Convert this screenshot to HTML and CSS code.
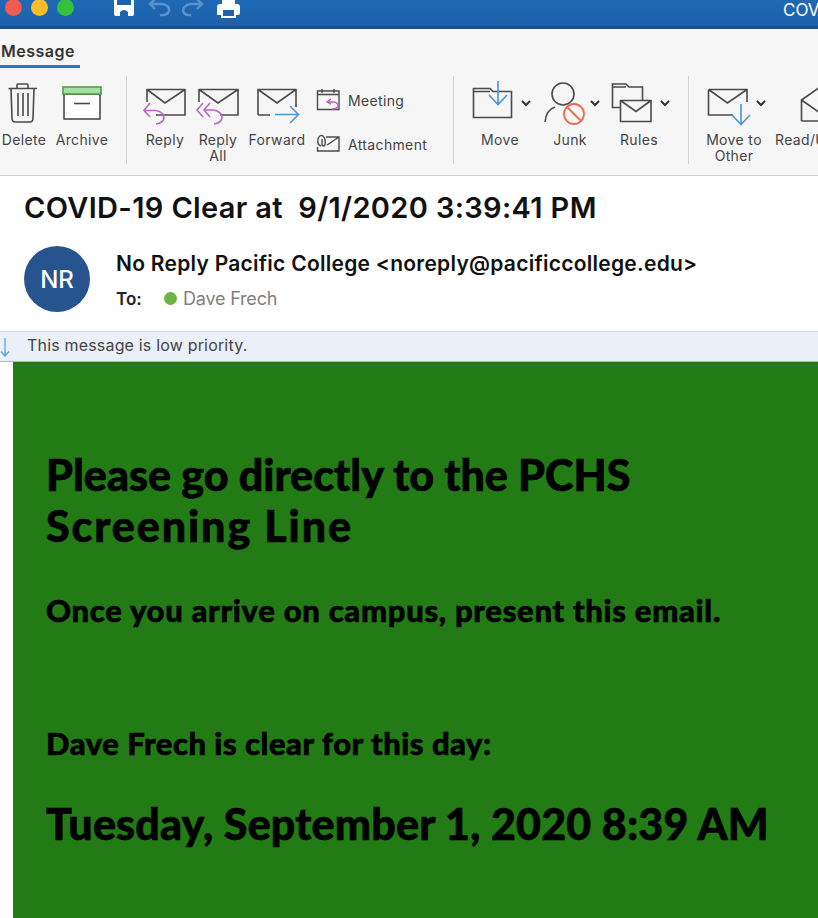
FILE: index.html
```html
<!DOCTYPE html>
<html lang="en">
<head>
    <meta charset="UTF-8">
    <title>COVID-19 Clear</title>
    <link rel="stylesheet" href="styles.css">
</head>
<body>
    <div class="titlebar">
        <div class="lights">
            <span class="light red"></span>
            <span class="light yellow"></span>
            <span class="light green"></span>
        </div>
        <svg class="quick" width="140" height="26" viewBox="110 0 140 26" fill="none">
            <path d="M114 -2H134V14Q134 16 132 16H116Q114 16 114 14Z" fill="#fff"/>
            <path d="M117 -2H131V5H117Z" fill="#1d64b0"/>
            <path d="M120 16V12Q124 8 128 12V16Z" fill="#1d64b0"/>
            <g stroke="#5a92cd" stroke-width="2.4">
                <path d="M155 -1L150 4L155 9M150 4H163Q170 6 169 11Q167 16 160 15"/>
                <path d="M197 -1L202 4L197 9M202 4H190Q183 6 183 11Q185 16 191 15"/>
            </g>
            <path d="M217 7Q217 4 220 4H237Q240 4 240 7V13Q240 15 237 15H217Z" fill="#fff"/>
            <path d="M222 -1H235V4H222Z" fill="#fff"/>
            <rect x="222" y="9" width="13" height="8" fill="#1d64b0" stroke="#fff" stroke-width="2"/>
        </svg>
        <span class="window-title">COVID-19 Clear at 9/1/2020</span>
    </div>

    <div class="ribbon">
        <div class="tabs"><span class="tab">Message</span></div>
        <div class="tools">
            <div class="tool">
                <svg width="48" height="50" viewBox="0 80 48 50" fill="none" stroke="#4a4a4a" stroke-width="1.6">
                    <path d="M8.500 88.500H37M17 88V85Q17 84 18 84H27Q28 84 28 85V88"/>
                    <path d="M11 88.500L12 118Q12 122 15 122H30Q33 122 33 118L34 88.500"/>
                    <path d="M18 93V116M23 93V116M28 93V116"/>
                </svg>
                <span>Delete</span>
            </div>
            <div class="tool">
                <svg width="68" height="50" viewBox="48 80 68 50" fill="none" stroke="#4a4a4a" stroke-width="1.6">
                    <rect x="64" y="94" width="36" height="25" fill="#fff"/>
                    <rect x="63" y="87" width="38" height="7" fill="#a6dfa2" stroke="#4f9d4f"/>
                    <path d="M74 103.500H90"/>
                </svg>
                <span>Archive</span>
            </div>
            <div class="sep"></div>
            <div class="tool">
                <svg width="52" height="50" viewBox="139 80 52 50" fill="none" stroke="#4a4a4a" stroke-width="1.6">
                    <path d="M147 102V89.500H185V115H156M147 89.500L165 103L185 89.500"/>
                    <path d="M150 103L144 110.500L150 117M144 110.500H156Q164 112 164 118Q163 123 156 124" stroke="#b968c7"/>
                </svg>
                <span>Reply</span>
            </div>
            <div class="tool">
                <svg width="52" height="50" viewBox="192 80 52 50" fill="none" stroke="#4a4a4a" stroke-width="1.6">
                    <path d="M199 102V89.500H238V115H220M199 89.500L218 103L238 89.500"/>
                    <path d="M203 103L197 110L203 117M210 103L204 110L210 117M204 110H214Q222 112 222 118Q221 123 214 124" stroke="#b968c7"/>
                </svg>
                <span>Reply<br>All</span>
            </div>
            <div class="tool">
                <svg width="62" height="50" viewBox="246 80 62 50" fill="none" stroke="#4a4a4a" stroke-width="1.6">
                    <path d="M258 115V89.500H296V107M258 115H270M258 89.500L277 103L296 89.500"/>
                    <path d="M275 114.500H298M290 106L298.500 114.500L290 123" stroke="#4a96dc"/>
                </svg>
                <span>Forward</span>
            </div>
            <div class="small-tools">
                <div class="small-tool">
                    <svg width="24" height="24" viewBox="316 89 24 24" fill="none" stroke="#4a4a4a" stroke-width="1.4">
                        <path d="M317.500 92H339V110.500H317.500Z"/>
                        <path d="M322 90V94M334 90V94M317.500 95.500H339"/>
                        <path d="M331 100L327 103L331 105M327 103H334Q339 104 338 108Q336 110 332 110" stroke="#b968c7"/>
                    </svg>
                    <span>Meeting</span>
                </div>
                <div class="small-tool">
                    <svg width="24" height="24" viewBox="316 132 24 24" fill="none" stroke="#4a4a4a" stroke-width="1.4">
                        <path d="M326 137H339V151H317.500V147M327 145L339 137"/>
                        <path d="M321 146Q317 145 318 139Q320 134 323 136Q326 139 325 145Q323 147 322 145L322 139"/>
                    </svg>
                    <span>Attachment</span>
                </div>
            </div>
            <div class="sep"></div>
            <div class="tool">
                <svg width="64" height="50" viewBox="468 80 64 50" fill="none" stroke="#4a4a4a" stroke-width="1.6">
                    <path d="M473.500 117.500V88.500H490L493 91.500H511.500V117.500Z M473.500 91.500H490"/>
                    <path d="M498 81V104M489 95L498 104.500L507 95" stroke="#4a96dc"/>
                    <path d="M522 101L526 105L530 101" stroke="#333" stroke-width="2"/>
                </svg>
                <span>Move</span>
            </div>
            <div class="tool">
                <svg width="64" height="50" viewBox="538 80 64 50" fill="none" stroke="#4a4a4a" stroke-width="1.6">
                    <circle cx="563" cy="94" r="11"/>
                    <path d="M545 122Q546 110 555 107M571 107L575 109"/>
                    <circle cx="574" cy="114" r="10" fill="#f7f7f7" stroke="#ee6a50" stroke-width="1.8"/>
                    <path d="M567 107L581 121" stroke="#ee6a50" stroke-width="1.8"/>
                    <path d="M591 101L595 105L599 101" stroke="#333" stroke-width="2"/>
                </svg>
                <span>Junk</span>
            </div>
            <div class="tool">
                <svg width="64" height="50" viewBox="607 80 64 50" fill="none" stroke="#4a4a4a" stroke-width="1.6">
                    <path d="M620 107.500H612.500V84H626L629 87H642.500V100M612.500 87H626"/>
                    <path d="M620.500 100.500H651V121.500H620.500ZM620.500 100.500L636 111.500L651 100.500" fill="#f7f7f7"/>
                    <path d="M661 101L665 105L669 101" stroke="#333" stroke-width="2"/>
                </svg>
                <span>Rules</span>
            </div>
            <div class="sep"></div>
            <div class="tool">
                <svg width="64" height="50" viewBox="702 80 64 50" fill="none" stroke="#4a4a4a" stroke-width="1.6">
                    <path d="M708.500 89.500H747V102M708.500 89.500V115H733M708.500 89.500L727.500 103L747 89.500"/>
                    <path d="M741 104V124M732 115L741 124.500L750 115" stroke="#4a96dc"/>
                    <path d="M757 101L761 105L765 101" stroke="#333" stroke-width="2"/>
                </svg>
                <span>Move to<br>Other</span>
            </div>
            <div class="tool tool-cut">
                <svg width="60" height="50" viewBox="770 80 60 50" fill="none" stroke="#4a4a4a" stroke-width="1.6">
                    <path d="M801.500 121V100L820 87M801.500 100L820 113M801.500 121H820"/>
                </svg>
                <span>Read/Unread</span>
            </div>
        </div>
    </div>

    <div class="mail-head">
        <h1 class="subject">COVID-19 Clear at&nbsp; 9/1/2020 3:39:41 PM</h1>
        <div class="sender-row">
            <div class="avatar">NR</div>
            <div class="sender-info">
                <div class="sender">No Reply Pacific College &lt;noreply@pacificcollege.edu&gt;</div>
                <div class="recipients">
                    <span class="to">To:</span>
                    <span class="status"></span>
                    <span class="person">Dave Frech</span>
                </div>
            </div>
        </div>
    </div>

    <div class="priority">
        <svg width="12" height="22" viewBox="0 0 12 22" fill="none" stroke="#5aa0e0" stroke-width="1.3">
            <path d="M5 2V20M1 15.500L5 20L9 15.500"/>
        </svg>
        <span>This message is low priority.</span>
    </div>

    <div class="mail-body">
        <div class="clear-card">
            <h2>Please go directly to the PCHS <span class="wide-line">Screening Line</span></h2>
            <p class="present">Once you arrive on campus, present this email.</p>
            <p class="clear-for">Dave Frech is clear for this day:</p>
            <p class="clear-date">Tuesday, September 1, 2020 8:39 AM</p>
        </div>
    </div>
</body>
</html>
```
FILE: styles.css
```css
html, body {
    margin: 0;
    padding: 0;
    height: 100%;
    overflow: hidden;
    background: #fff;
}
body {
    width: 818px;
    height: 918px;
    font-family: Inter, "Liberation Sans", sans-serif;
    display: flex;
    flex-direction: column;
}
.titlebar {
    height: 26px;
    flex: none;
    display: flex;
    align-items: flex-start;
    background: linear-gradient(#2069b6, #1b60a9);
    border-bottom: 3px solid #15508f;
    overflow: hidden;
}
.titlebar .quick {
    margin-left: 36px;
    flex: none;
}
.lights {
    display: flex;
    gap: 9px;
    margin: -1px 0 0 5px;
    flex: none;
}
.light {
    width: 17px;
    height: 17px;
    border-radius: 50%;
}
.red { background: #f25a52; }
.yellow { background: #fbbb2e; }
.green { background: #35c13f; }
.window-title {
    color: #fff;
    font-size: 17px;
    white-space: nowrap;
    margin-left: 533px;
    flex: none;
}
.ribbon {
    height: 146px;
    flex: none;
    background: #f6f6f6;
    border-bottom: 1px solid #d2d2d2;
    overflow: hidden;
}
.tabs {
    height: 39px;
    box-sizing: border-box;
    padding-top: 12px;
}
.tab {
    display: inline-block;
    width: 80px;
    height: 27px;
    box-sizing: border-box;
    padding-left: 1px;
    font-size: 16px;
    font-weight: 600;
    letter-spacing: 0.5px;
    line-height: 20px;
    color: #333;
    border-bottom: 3px solid #2a72c4;
}
.tools {
    display: grid;
    grid-template-columns: 48px 68px 10px 1px 12px 52px 1px 52px 2px 62px 8px 137px 1px 14px 64px 6px 64px 5px 64px 17px 1px 13px 64px 4px 60px;
    height: 86px;
    margin-top: 8px;
}
.tool {
    display: flex;
    flex-direction: column;
    align-items: center;
    font-size: 14px;
    letter-spacing: 0.35px;
    line-height: 16px;
    color: #444;
    text-align: center;
    white-space: nowrap;
}
.tool svg {
    flex: none;
    margin-bottom: 2px;
    margin-top: 4px;
    display: block;
}
.sep {
    background: #d4d4d4;
}
.tools > :nth-child(1) { grid-column: 1; }
.tools > :nth-child(2) { grid-column: 2; }
.tools > :nth-child(3) { grid-column: 4; }
.tools > :nth-child(4) { grid-column: 6; }
.tools > :nth-child(5) { grid-column: 8; }
.tools > :nth-child(6) { grid-column: 10; }
.tools > :nth-child(7) { grid-column: 12; }
.tools > :nth-child(8) { grid-column: 13; }
.tools > :nth-child(9) { grid-column: 15; }
.tools > :nth-child(10) { grid-column: 17; }
.tools > :nth-child(11) { grid-column: 19; }
.tools > :nth-child(12) { grid-column: 21; }
.tools > :nth-child(13) { grid-column: 23; }
.tools > :nth-child(14) { grid-column: 25; }
.small-tools {
    display: flex;
    flex-direction: column;
    gap: 20px;
    padding-top: 12px;
}
.small-tool {
    display: flex;
    align-items: center;
    gap: 8px;
    font-size: 14px;
    letter-spacing: 0.35px;
    color: #444;
    height: 24px;
}
.tool-cut {
    align-items: flex-start;
}
.tool-cut span {
    margin-left: 5px;
}
.mail-head {
    height: 155px;
    flex: none;
    box-sizing: border-box;
    padding: 16px 0 0 24px;
    background: #fff;
}
.subject {
    margin: 0;
    font-size: 29px;
    letter-spacing: 0.35px;
    line-height: 32px;
    font-weight: 600;
    color: #111;
    white-space: nowrap;
}
.sender-row {
    display: flex;
    margin-top: 22px;
}
.avatar {
    width: 66px;
    height: 66px;
    border-radius: 50%;
    background: #27548f;
    color: #fff;
    font-size: 24px;
    font-weight: 500;
    display: flex;
    align-items: center;
    justify-content: center;
    margin-right: 26px;
    flex: none;
}
.sender-info {
    padding-top: 5px;
}
.sender {
    font-size: 21px;
    letter-spacing: 0.26px;
    line-height: 26px;
    font-weight: 600;
    color: #111;
    white-space: nowrap;
}
.recipients {
    display: flex;
    align-items: center;
    margin-top: 11px;
    font-size: 17px;
}
.to {
    width: 48px;
    font-weight: 600;
    color: #222;
}
.status {
    width: 13px;
    height: 13px;
    border-radius: 50%;
    background: #6db33f;
    margin-right: 6px;
}
.person {
    color: #808080;
    font-size: 18px;
    letter-spacing: -0.2px;
}
.priority {
    height: 31px;
    flex: none;
    box-sizing: border-box;
    background: #eaeff8;
    border-top: 1px solid #d8dbe0;
    border-bottom: 1px solid #b5b5b5;
    display: flex;
    align-items: center;
    font-size: 16px;
    letter-spacing: 0.18px;
    color: #444;
}
.priority span {
    margin-bottom: 3px;
}
.priority svg {
    margin-right: 15px;
    flex: none;
}
.mail-body {
    flex: 1;
    padding-left: 13px;
    min-height: 0;
}
.clear-card {
    height: 100%;
    box-sizing: border-box;
    background: #227b15;
    padding: 87px 33px 0;
    font-family: Lato, "Open Sans", sans-serif;
    font-weight: 900;
    color: #000;
    -webkit-text-stroke: 0.6px #000;
}
.clear-card h2 {
    margin: 0;
    font-size: 43px;
    line-height: 51px;
    font-weight: 900;
    max-width: 640px;
}
.wide-line {
    letter-spacing: 1.9px;
}
.clear-card p {
    margin: 0;
}
.clear-card .present {
    font-size: 31px;
    letter-spacing: 0.7px;
    line-height: 38px;
    margin-top: 40px;
}
.clear-card .clear-for {
    font-size: 31px;
    letter-spacing: 0.5px;
    line-height: 38px;
    margin-top: 95px;
}
.clear-card .clear-date {
    font-size: 43px;
    letter-spacing: 0.18px;
    line-height: 52px;
    margin-top: 36px;
    white-space: nowrap;
}
```
